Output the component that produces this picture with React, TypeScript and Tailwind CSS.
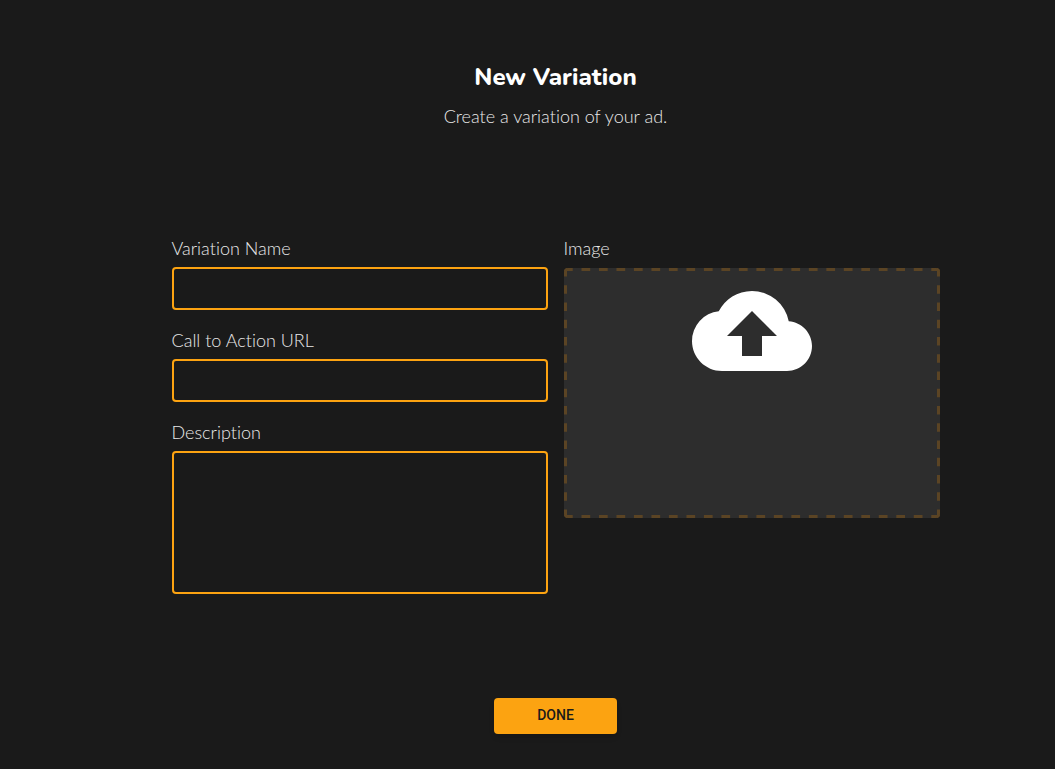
import { MdBackup } from "react-icons/md";

const inputStyle =
  "block w-full rounded-sm border-2 border-[#fca311] bg-transparent px-3 text-lg text-white outline-none";
const labelStyle = "block text-lg leading-6";

function DashedOutline() {
  const edges = [
    { x1: "0", y1: "0", x2: "100%", y2: "0", dashes: 43 },
    { x1: "0", y1: "100%", x2: "100%", y2: "100%", dashes: 43 },
    { x1: "0", y1: "0", x2: "0", y2: "100%", dashes: 29 },
    { x1: "100%", y1: "0", x2: "100%", y2: "100%", dashes: 29 },
  ];
  return (
    <svg className="pointer-events-none absolute inset-0 size-full" aria-hidden="true">
      {edges.map(({ dashes, ...edge }, i) => (
        <line key={i} {...edge} pathLength={dashes} strokeDasharray="1 1" stroke="#5b4424" strokeWidth="6" />
      ))}
    </svg>
  );
}

export default function App() {
  return (
    <main className="flex min-h-screen flex-col bg-[#1a1a1a] pl-14 font-['Lato',sans-serif] font-light text-white [font-variant-ligatures:none]">
      <form className="mx-auto flex w-full max-w-3xl flex-col" onSubmit={(e) => e.preventDefault()}>
        <header className="pt-[61px] text-center">
          <h1 className="font-['Nunito','Open_Sans',sans-serif] text-2xl leading-8 font-extrabold">New Variation</h1>
          <p className="mt-[7px] text-lg leading-8 text-[#e8e8e8]">Create a variation of your ad.</p>
        </header>
        <div className="mt-[104px] grid grid-cols-2 gap-4 text-[#e8e8e8]">
          <div className="flex flex-col gap-[18px]">
            <div>
              <label htmlFor="name" className={`${labelStyle} pb-[7px]`}>Variation Name</label>
              <input id="name" type="text" className={`${inputStyle} h-[43px]`} />
            </div>
            <div>
              <label htmlFor="url" className={`${labelStyle} pb-[7px]`}>Call to Action URL</label>
              <input id="url" type="url" className={`${inputStyle} h-[43px]`} />
            </div>
            <div>
              <label htmlFor="description" className={`${labelStyle} pb-[7px]`}>Description</label>
              <textarea id="description" className={`${inputStyle} h-[143px] resize-none py-2`} />
            </div>
          </div>
          <div>
            <label htmlFor="image" className={`${labelStyle} pb-2`}>Image</label>
            <label
              htmlFor="image"
              className="relative flex h-[250px] cursor-pointer justify-center overflow-hidden rounded-sm bg-[#2d2d2d] pt-[3px] text-white"
            >
              <DashedOutline />
              <MdBackup className="size-[120px]" aria-hidden="true" />
              <input id="image" type="file" accept="image/*" aria-label="Upload image" className="sr-only" />
            </label>
          </div>
        </div>
        <button
          type="submit"
          className="mx-auto mt-[104px] h-9 w-[123px] rounded-sm bg-[#fca311] pb-0.5 font-['Roboto',sans-serif] text-sm font-medium text-[#1a1a1a] shadow-md"
        >
          DONE
        </button>
      </form>
    </main>
  );
}
